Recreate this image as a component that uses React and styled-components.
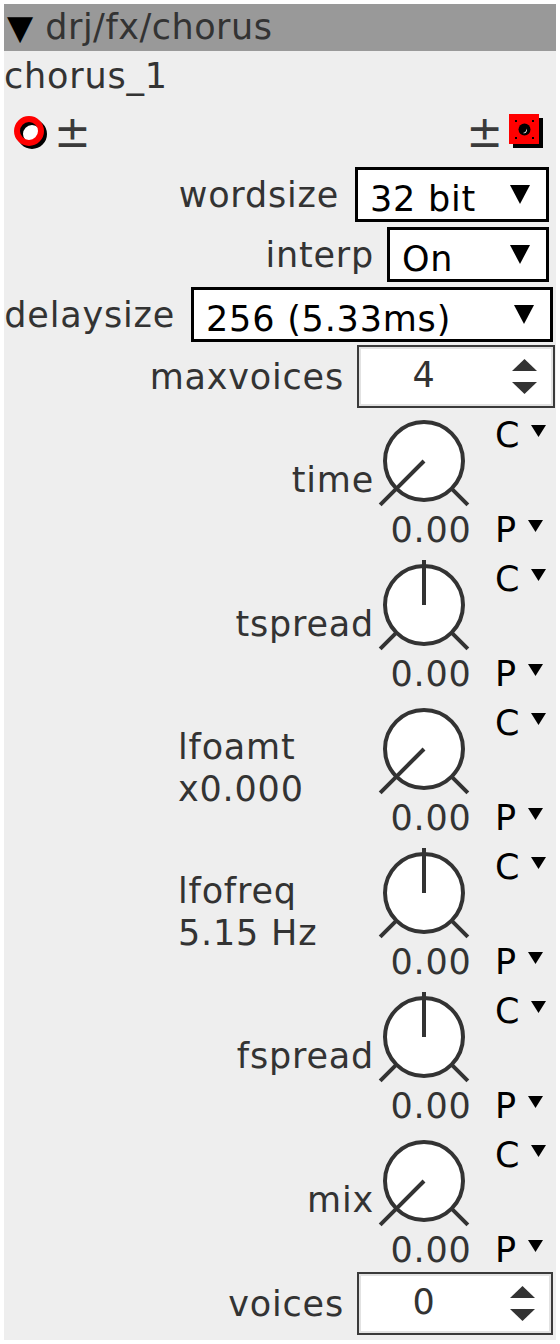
import styled, { createGlobalStyle } from 'styled-components';

const GlobalStyle = createGlobalStyle`
  body {
    margin: 4px;
    background: #fff;
    font-family: "DejaVu Sans", "Liberation Sans", sans-serif;
  }
`;

const Panel = styled.div`
  width: 552px;
  background: #eee;
  padding-bottom: 5px;
  font-size: 35px;
  letter-spacing: 0.8px;
  color: #333;
`;

const Header = styled.div`
  height: 47px;
  line-height: 47px;
  background: #999;
  color: #333;
  padding-left: 3px;
  letter-spacing: 0.5px;
  white-space: nowrap;

  span {
    color: #000;
    font-size: 34px;
  }
`;

const Name = styled.div`
  height: 43px;
  padding-top: 7px;
  line-height: 36px;
`;

const Ports = styled.div`
  height: 61px;
  display: flex;
  align-items: center;
  justify-content: space-between;
  padding: 0 9px 0 8px;
`;

const PortGroup = styled.div`
  display: flex;
  align-items: center;
  gap: ${(p) => p.$gap}px;
`;

const PlusMinus = styled.span`
  font-size: 44px;
  line-height: 44px;
  letter-spacing: 0;
  color: #3a3a3a;
`;

const Field = styled.div`
  display: flex;
  justify-content: flex-end;
  align-items: center;
  gap: ${(p) => p.$gap}px;
  height: ${(p) => p.$h}px;
  margin-top: ${(p) => p.$mt}px;
  padding-right: ${(p) => p.$pr}px;
`;

const Label = styled.div`
  line-height: 36px;
  color: #333;
  white-space: nowrap;
`;

const Select = styled.div`
  width: ${(p) => p.$w}px;
  height: 55px;
  box-sizing: border-box;
  border: 3px solid #000;
  background: #fff;
  display: flex;
  justify-content: space-between;
  padding: 0 16px 0 12px;
  color: #000;
`;

const SelectText = styled.span`
  align-self: flex-end;
  margin-bottom: 2px;
  line-height: 36px;
  white-space: nowrap;
`;

const SelectArrow = styled.svg`
  align-self: center;
`;

const Spinner = styled.div`
  width: ${(p) => p.$w}px;
  height: 63px;
  box-sizing: border-box;
  border: 2px solid #3a3a3a;
  box-shadow: inset 0 0 0 2px #e2e2e2;
  background: #fff;
  display: flex;
  align-items: center;
`;

const SpinValue = styled.span`
  width: 130px;
  text-align: center;
  line-height: 36px;
  padding-bottom: 4px;
  color: #333;
`;

const SpinArrows = styled.svg`
  margin-left: auto;
  margin-right: 16px;
`;

const Knobs = styled.div`
  display: flex;
  flex-direction: column;
  gap: 8px;
  margin-top: 4px;
`;

const KnobRow = styled.div`
  display: grid;
  grid-template-columns: 1fr 102px 80px;
  grid-template-rows: 100px 36px;
`;

const KnobLabel = styled.div`
  grid-row: 1 / 3;
  align-self: center;
  justify-self: end;
  width: ${(p) => (p.$align === 'left' ? 196 : 220)}px;
  text-align: ${(p) => p.$align};
  line-height: 42px;
  white-space: nowrap;
`;

const KnobValue = styled.div`
  grid-column: 2;
  grid-row: 2;
  text-align: center;
  padding-left: 12px;
  line-height: 36px;
  color: #333;
`;

const Assign = styled.div`
  grid-column: 3;
  grid-row: ${(p) => p.$row};
  display: flex;
  align-items: flex-start;
  padding-left: 19px;
  margin-top: ${(p) => (p.$row === 1 ? 5 : 0)}px;
  color: #000;
  line-height: 36px;

  svg {
    margin-left: 11px;
    margin-top: 8px;
  }
`;

function Inlet() {
  return (
    <svg width="36" height="36" viewBox="0 0 36 36">
      <circle cx="17" cy="17" r="12" fill="#fff" />
      <circle cx="20" cy="20" r="12" fill="none" stroke="#000" strokeWidth="6" />
      <circle cx="17" cy="17" r="12" fill="none" stroke="#f00" strokeWidth="6" />
    </svg>
  );
}

function Outlet() {
  return (
    <svg width="40" height="40" viewBox="0 0 40 40">
      <rect x="6" y="6" width="30" height="30" fill="#000" />
      <rect x="2" y="2" width="30" height="30" fill="#f00" />
      <circle cx="17.5" cy="17.5" r="6" fill="#000" />
      <path d="M19.5 16.5 A3 3 0 0 1 16 21 A4 4 0 0 0 19.5 16.5 Z" fill="#fff" />
      <rect x="8" y="8" width="2" height="2" fill="#000" />
      <rect x="25" y="8" width="2" height="2" fill="#000" />
      <rect x="8" y="25" width="2" height="2" fill="#000" />
      <rect x="25" y="25" width="2" height="2" fill="#000" />
    </svg>
  );
}

function Knob({ bipolar }) {
  const cx = 50;
  const cy = 49;
  const d = 0.7071;
  return (
    <svg width="102" height="100" viewBox="0 0 102 100">
      <circle cx={cx} cy={cy} r="39" fill="#fff" stroke="#333" strokeWidth="4" />
      <line x1={cx - 39 * d} y1={cy + 39 * d} x2={cx - 62 * d} y2={cy + 62 * d} stroke="#333" strokeWidth="4" />
      <line x1={cx + 39 * d} y1={cy + 39 * d} x2={cx + 62 * d} y2={cy + 62 * d} stroke="#333" strokeWidth="4" />
      {bipolar ? (
        <line x1={cx} y1={cy} x2={cx} y2={cy - 45} stroke="#333" strokeWidth="4" />
      ) : (
        <line x1={cx} y1={cy} x2={cx - 39 * d} y2={cy + 39 * d} stroke="#333" strokeWidth="4" />
      )}
    </svg>
  );
}

const SmallArrow = () => (
  <svg width="15" height="12" viewBox="0 0 15 12">
    <polygon points="0,0 15,0 7.5,12" fill="#000" />
  </svg>
);

const selects = [
  { label: 'wordsize', value: '32 bit', w: 194, mt: 5, pr: 7, gap: 16 },
  { label: 'interp', value: 'On', w: 162, mt: 5, pr: 7, gap: 13 },
  { label: 'delaysize', value: '256 (5.33ms)', w: 362, mt: 5, pr: 3, gap: 16 },
];

const knobs = [
  { label: ['time'], bipolar: false },
  { label: ['tspread'], bipolar: true },
  { label: ['lfoamt', 'x0.000'], bipolar: false },
  { label: ['lfofreq', '5.15 Hz'], bipolar: true },
  { label: ['fspread'], bipolar: true },
  { label: ['mix'], bipolar: false },
];

function SpinBox({ label, value, w, mt, pr }) {
  return (
    <Field $h={63} $mt={mt} $pr={pr} $gap={13}>
      <Label>{label}</Label>
      <Spinner $w={w}>
        <SpinValue>{value}</SpinValue>
        <SpinArrows width="25" height="35" viewBox="0 0 25 35">
          <polygon points="0,12 12.5,0 25,12" fill="#333" />
          <polygon points="0,23 25,23 12.5,35" fill="#333" />
        </SpinArrows>
      </Spinner>
    </Field>
  );
}

export default function App() {
  return (
    <>
      <GlobalStyle />
      <Panel>
        <Header>
          <span>▼</span> drj/fx/chorus
        </Header>
        <Name>chorus_1</Name>
        <Ports>
          <PortGroup $gap={6}>
            <Inlet />
            <PlusMinus>±</PlusMinus>
          </PortGroup>
          <PortGroup $gap={4}>
            <PlusMinus>±</PlusMinus>
            <Outlet />
          </PortGroup>
        </Ports>

        {selects.map((s) => (
          <Field key={s.label} $h={55} $mt={s.mt} $pr={s.pr} $gap={s.gap}>
            <Label>{s.label}</Label>
            <Select $w={s.w}>
              <SelectText>{s.value}</SelectText>
              <SelectArrow width="20" height="19" viewBox="0 0 20 19">
                <polygon points="0,0 20,0 10,19" fill="#000" />
              </SelectArrow>
            </Select>
          </Field>
        ))}

        <SpinBox label="maxvoices" value="4" w={198} mt={3} pr={1} />

        <Knobs>
          {knobs.map((k) => (
            <KnobRow key={k.label[0]}>
              <KnobLabel $align={k.label.length > 1 ? 'left' : 'right'}>
                {k.label.map((line) => (
                  <div key={line}>{line}</div>
                ))}
              </KnobLabel>
              <Knob bipolar={k.bipolar} />
              <Assign $row={1}>
                C
                <SmallArrow />
              </Assign>
              <KnobValue>0.00</KnobValue>
              <Assign $row={2}>
                P
                <SmallArrow />
              </Assign>
            </KnobRow>
          ))}
        </Knobs>

        <SpinBox label="voices" value="0" w={196} mt={4} pr={3} />
      </Panel>
    </>
  );
}
